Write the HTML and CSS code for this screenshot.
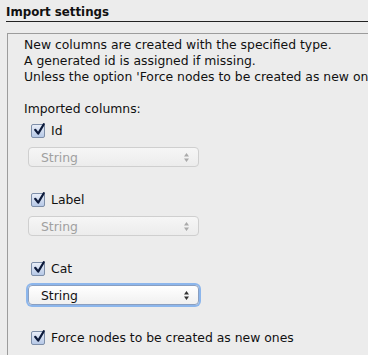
FILE: index.html
```html
<!DOCTYPE html>
<html>
<head>
<meta charset="utf-8">
<link rel="stylesheet" href="styles.css">
</head>
<body>
<div class="panel">
  <div class="title">Import settings</div>
  <div class="box">
    <div class="info">
      <div>New columns are created with the specified type.</div>
      <div>A generated id is assigned if missing.</div>
      <div>Unless the option 'Force nodes to be created as new ones' is selected.</div>
    </div>
    <div class="sub">Imported columns:</div>
    <div class="col">
      <label class="check"><span class="cb"><svg viewBox="0 0 14 14" width="14" height="14"><path d="M3.2 6.8 L6.2 10.6 L11.8 1.2" fill="none" stroke="#0d1a3a" stroke-width="2.2" stroke-linecap="round" stroke-linejoin="round"/></svg></span>Id</label>
      <div class="select disabled"><span>String</span><span class="arrows"><svg viewBox="0 0 7 11" width="7" height="11"><path d="M3.5 1 L6 4.5 L1 4.5 Z M3.5 10 L6 6.5 L1 6.5 Z" fill="#aaa"/></svg></span></div>
    </div>
    <div class="col">
      <label class="check"><span class="cb"><svg viewBox="0 0 14 14" width="14" height="14"><path d="M3.2 6.8 L6.2 10.6 L11.8 1.2" fill="none" stroke="#0d1a3a" stroke-width="2.2" stroke-linecap="round" stroke-linejoin="round"/></svg></span>Label</label>
      <div class="select disabled"><span>String</span><span class="arrows"><svg viewBox="0 0 7 11" width="7" height="11"><path d="M3.5 1 L6 4.5 L1 4.5 Z M3.5 10 L6 6.5 L1 6.5 Z" fill="#aaa"/></svg></span></div>
    </div>
    <div class="col">
      <label class="check"><span class="cb"><svg viewBox="0 0 14 14" width="14" height="14"><path d="M3.2 6.8 L6.2 10.6 L11.8 1.2" fill="none" stroke="#0d1a3a" stroke-width="2.2" stroke-linecap="round" stroke-linejoin="round"/></svg></span>Cat</label>
      <div class="select focus"><span>String</span><span class="arrows"><svg viewBox="0 0 7 11" width="7" height="11"><path d="M3.5 1 L6 4.5 L1 4.5 Z M3.5 10 L6 6.5 L1 6.5 Z" fill="#333"/></svg></span></div>
    </div>
    <label class="check force"><span class="cb"><svg viewBox="0 0 14 14" width="14" height="14"><path d="M3.2 6.8 L6.2 10.6 L11.8 1.2" fill="none" stroke="#0d1a3a" stroke-width="2.2" stroke-linecap="round" stroke-linejoin="round"/></svg></span>Force nodes to be created as new ones</label>
  </div>
</div>
</body>
</html>
```

FILE: styles.css
```css
html, body {
  margin: 0;
  padding: 0;
  background: #ececec;
  overflow: hidden;
}
body {
  font-family: "DejaVu Sans", "Lucida Grande", sans-serif;
  font-size: 12.4px;
  color: #111;
  width: 368px;
  height: 355px;
}
.panel {
  padding: 5px 0 0 6px;
}
.title {
  font-weight: bold;
  font-size: 11.8px;
  line-height: 15px;
  padding-bottom: 1px;
  border-bottom: 1px solid #222;
  white-space: nowrap;
}
.box {
  margin: 11px 0 0 1px;
  border-top: 1px solid #9c9c9c;
  border-left: 1px solid #9c9c9c;
  padding: 3px 0 0 16px;
  white-space: nowrap;
  overflow: hidden;
  height: 330px;
}
.info {
  line-height: 16px;
}
.sub {
  margin-top: 16px;
  line-height: 16px;
}
.col {
  display: flex;
  flex-direction: column;
  margin-top: 5px;
  margin-bottom: 24px;
}
.check {
  display: flex;
  align-items: center;
  gap: 6px;
  margin-left: 7px;
  line-height: 18px;
  height: 18px;
}
.cb {
  width: 14px;
  height: 14px;
  box-sizing: border-box;
  border: 1px solid #7d8ea8;
  border-radius: 2px;
  background: linear-gradient(#e9eef8, #b6c8e6);
  position: relative;
  display: inline-block;
}
.cb svg {
  position: absolute;
  left: 0;
  top: -2px;
}
.select {
  margin: 7px 0 0 4px;
  width: 171px;
  height: 20px;
  box-sizing: border-box;
  border-radius: 4px;
  display: flex;
  align-items: center;
  justify-content: space-between;
  padding: 0 8px 0 12px;
}
.select.disabled {
  border: 1px solid #cfcfcf;
  background: linear-gradient(#f6f6f6, #ececec);
  color: #a0a0a0;
}
.select.focus {
  border: 1px solid #8a9fc0;
  box-shadow: 0 0 0 2px #8cb6ec;
  background: linear-gradient(#ffffff, #f0f0f0);
  color: #111;
}
.arrows {
  display: flex;
}
.force {
  margin-top: 3px;
}
```
